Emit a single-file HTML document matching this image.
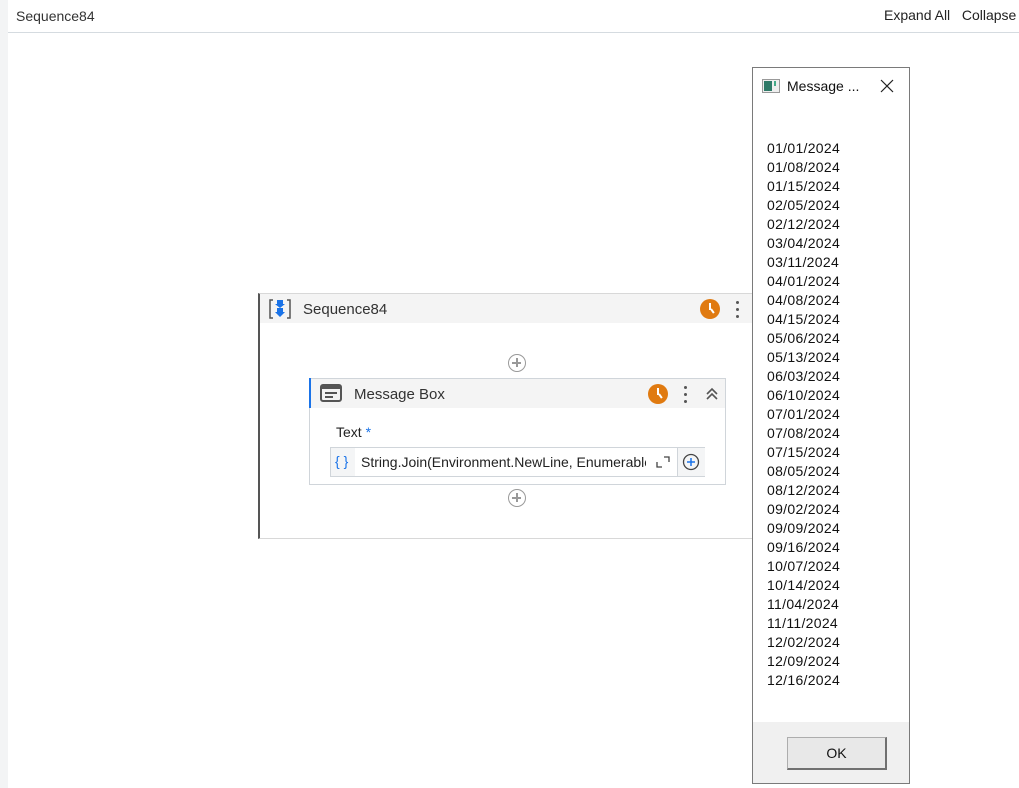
<!DOCTYPE html>
<html><head><style>
body{margin:0;width:1019px;height:788px;position:relative;overflow:hidden;background:#fff;font-family:"Liberation Sans",sans-serif;color:#222}
.a{position:absolute}
.plus{position:absolute;width:18px;height:18px;border:1.5px solid #999;border-radius:50%;box-sizing:border-box}
.plus:before{content:"";position:absolute;left:3px;top:7px;width:9px;height:1.5px;background:#999}
.plus:after{content:"";position:absolute;left:7px;top:3px;width:1.5px;height:9px;background:#999}
.clock{position:absolute;width:20px;height:20px;border-radius:50%;background:#e07a10}
.clock:before{content:"";position:absolute;left:9px;top:4px;width:2px;height:7px;background:#fff}
.clock:after{content:"";position:absolute;left:10px;top:10px;width:2px;height:5px;background:#fff;transform:rotate(-35deg);transform-origin:top}
.dots{position:absolute;width:3px}
.dots i{display:block;width:3px;height:3px;background:#555;border-radius:50%;margin-bottom:4px}
</style></head><body>
<div class="a" style="left:0;top:0;width:8px;height:788px;background:#f3f4f5"></div>
<div class="a" style="left:8px;top:32px;width:1011px;height:1px;background:#d5dbe0"></div>
<div class="a" style="left:16px;top:8px;font-size:14px;color:#333">Sequence84</div>
<div class="a" style="left:884px;top:7px;font-size:14px;color:#222;white-space:nowrap">Expand All&nbsp;&nbsp; Collapse</div>

<div class="a" style="left:258px;top:293px;width:500px;height:246px;border:1px solid #d8d8d8;border-left:2px solid #555;box-sizing:border-box"></div>
<div class="a" style="left:260px;top:294px;width:498px;height:29px;background:#f4f4f4"></div>
<svg class="a" style="left:268px;top:298px" width="24" height="22" viewBox="0 0 24 22"><path d="M5 2H2V20H5M19 2H22V20H19" fill="none" stroke="#555" stroke-width="1.5"/><path d="M9 2h6v4h2l-5 4-5-4h2z M9 10h6v4h2l-5 5-5-5h2z" fill="#1a73e8"/></svg>
<div class="a" style="left:303px;top:301px;font-size:15px;color:#333">Sequence84</div>
<div class="clock" style="left:700px;top:299px"></div>
<div class="dots" style="left:736px;top:301px"><i></i><i></i><i></i></div>
<div class="plus" style="left:508px;top:354px"></div>
<div class="plus" style="left:508px;top:489px"></div>

<div class="a" style="left:309px;top:378px;width:417px;height:107px;border:1px solid #d0d5da;box-sizing:border-box"></div>
<div class="a" style="left:309px;top:378px;width:417px;height:30px;background:#f4f4f4;border:1px solid #d0d5da;border-bottom:none;box-sizing:border-box"></div>
<div class="a" style="left:309px;top:378px;width:2px;height:30px;background:#1a73e8"></div>
<svg class="a" style="left:320px;top:384px" width="22" height="18" viewBox="0 0 22 18"><rect x="1" y="1" width="20" height="16" rx="2" fill="none" stroke="#555" stroke-width="2"/><rect x="1" y="1" width="20" height="4" fill="#555"/><path d="M5 9h12M5 13h8" stroke="#555" stroke-width="2"/></svg>
<div class="a" style="left:354px;top:386px;font-size:15px;color:#333">Message Box</div>
<div class="clock" style="left:648px;top:384px"></div>
<div class="dots" style="left:684px;top:386px"><i></i><i></i><i></i></div>
<svg class="a" style="left:705px;top:387px" width="14" height="14" viewBox="0 0 14 14"><path d="M2 7l5-5 5 5M2 12l5-5 5 5" fill="none" stroke="#555" stroke-width="1.6"/></svg>
<div class="a" style="left:336px;top:424px;font-size:14px;color:#222">Text <span style="color:#1a73e8">*</span></div>
<div class="a" style="left:330px;top:447px;width:375px;height:30px;border:1px solid #d0d5da;box-sizing:border-box;background:#fff"></div>
<div class="a" style="left:331px;top:448px;width:24px;height:28px;background:#f4f5f6"></div>
<div class="a" style="left:335px;top:453px;font-size:14px;color:#1a73e8">{ }</div>
<div class="a" style="left:361px;top:454px;font-size:14px;color:#222;width:285px;overflow:hidden;white-space:nowrap">String.Join(Environment.NewLine, Enumerable</div>
<svg class="a" style="left:656px;top:455px" width="14" height="14" viewBox="0 0 14 14"><path d="M1 7v5h5M8 2h5v5" fill="none" stroke="#444" stroke-width="1.3"/></svg>
<div class="a" style="left:677px;top:448px;width:27px;height:28px;background:#f4f5f6;border-left:1px solid #d0d5da"></div>
<svg class="a" style="left:682px;top:453px" width="18" height="18" viewBox="0 0 18 18"><circle cx="9" cy="9" r="7.5" fill="none" stroke="#444" stroke-width="1.3"/><path d="M5 9h8M9 5v8" stroke="#1a73e8" stroke-width="1.5"/></svg>

<div class="a" style="left:752px;top:67px;width:158px;height:717px;border:1px solid #7a7a7a;box-sizing:border-box;background:#fff"></div>
<div class="a" style="left:753px;top:722px;width:156px;height:61px;background:#f0f0f0"></div>
<svg class="a" style="left:762px;top:79px" width="18" height="14" viewBox="0 0 18 14"><rect x="0.5" y="0.5" width="17" height="13" fill="#eee" stroke="#999"/><rect x="2" y="2" width="8" height="10" fill="#2f7a68"/><rect x="12" y="2" width="2" height="5" fill="#4a8"/></svg>
<div class="a" style="left:787px;top:78px;font-size:14px;color:#111">Message ...</div>
<svg class="a" style="left:880px;top:79px" width="14" height="14" viewBox="0 0 14 14"><path d="M1 1l12 12M13 1L1 13" stroke="#222" stroke-width="1.2"/></svg>
<div class="a" style="left:767px;top:139px;font-size:14px;letter-spacing:0.3px;line-height:19px;color:#111">01/01/2024<br>01/08/2024<br>01/15/2024<br>02/05/2024<br>02/12/2024<br>03/04/2024<br>03/11/2024<br>04/01/2024<br>04/08/2024<br>04/15/2024<br>05/06/2024<br>05/13/2024<br>06/03/2024<br>06/10/2024<br>07/01/2024<br>07/08/2024<br>07/15/2024<br>08/05/2024<br>08/12/2024<br>09/02/2024<br>09/09/2024<br>09/16/2024<br>10/07/2024<br>10/14/2024<br>11/04/2024<br>11/11/2024<br>12/02/2024<br>12/09/2024<br>12/16/2024</div>
<div class="a" style="left:787px;top:737px;width:100px;height:33px;border:1px solid #adadad;border-right:2px solid #707070;border-bottom:2px solid #707070;box-sizing:border-box;background:#e8e8e8;font-size:14px;text-align:center;line-height:30px;color:#111">OK</div>
</body></html>
